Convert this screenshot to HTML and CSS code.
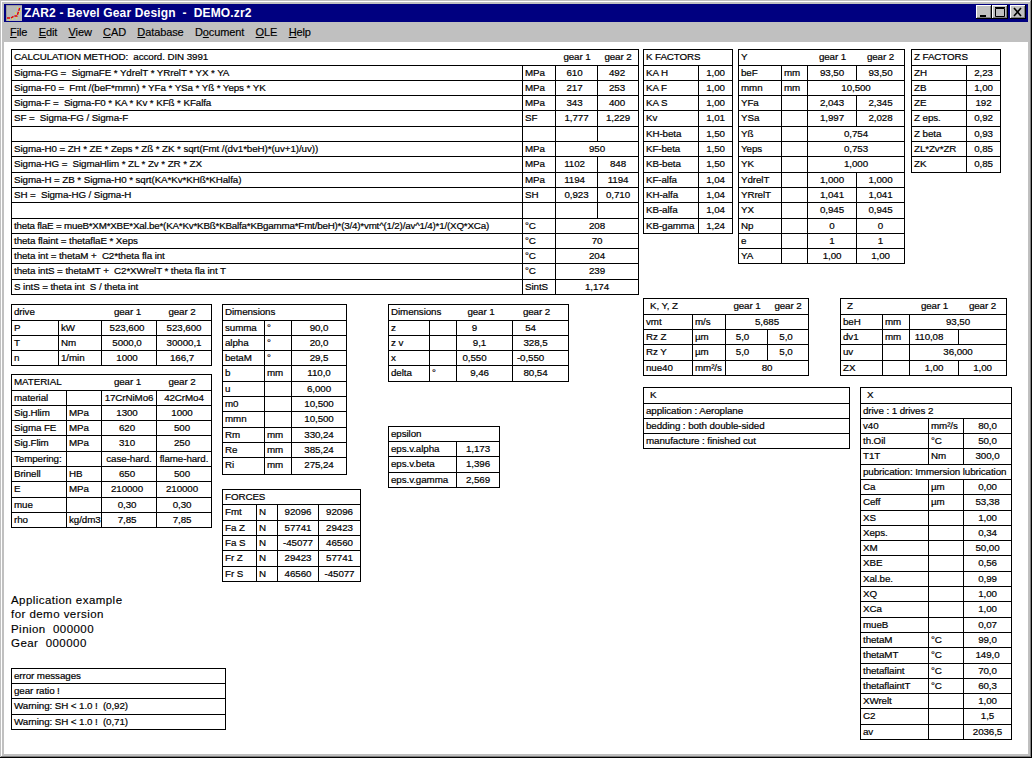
FILE: index.html
```html
<!DOCTYPE html>
<html lang="en">
<head>
<meta charset="utf-8">
<title>ZAR2 - Bevel Gear Design - DEMO.zr2</title>
<link rel="stylesheet" href="styles.css">
</head>
<body>
<div class="window">
  <div class="titlebar">
    <svg class="appicon" viewBox="0 0 16 16" width="16" height="16">
      <rect width="16" height="16" fill="#b8b8b8"/>
      <path d="M0 16V0h16" fill="none" stroke="#808080"/>
      <path d="M1 13h4l3-2h3l1-3 2-6" fill="none" stroke="#e00000" stroke-width="1.4" stroke-dasharray="3 1"/>
      <path d="M3 15h1M6 14h1M9 8h1M10 13h1M14 6h1M11 3h1M13 9h1" stroke="#ffff00"/>
    </svg>
    <span class="title">ZAR2 - Bevel Gear Design &nbsp;-&nbsp; DEMO.zr2</span>
    <div class="winbtns">
      <span class="winbtn"><svg viewBox="0 0 15 14" width="15" height="14"><path d="M4 11h6" stroke="#000" stroke-width="2"/></svg></span>
      <span class="winbtn"><svg viewBox="0 0 15 14" width="15" height="14"><path d="M3.5 3.5h9v8h-9zM3 2.5h10" fill="none" stroke="#000"/></svg></span>
      <span class="winbtn close"><svg viewBox="0 0 15 14" width="15" height="14"><path d="M4 3l7 8M11 3l-7 8" stroke="#000" stroke-width="1.6"/></svg></span>
    </div>
  </div>
  <div class="menubar">
    <span class="mi"><u>F</u>ile</span>
    <span class="mi"><u>E</u>dit</span>
    <span class="mi"><u>V</u>iew</span>
    <span class="mi"><u>C</u>AD</span>
    <span class="mi"><u>D</u>atabase</span>
    <span class="mi">D<u>o</u>cument</span>
    <span class="mi"><u>O</u>LE</span>
    <span class="mi"><u>H</u>elp</span>
  </div>
  <div class="client">
    <div class="leftcol">
      <div class="t calc">
        <div class="c nb s2">CALCULATION METHOD: &nbsp;accord. DIN 3991</div><div class="n nb">gear 1</div><div class="n">gear 2</div>
        <div class="c">Sigma-FG = &nbsp;SigmaFE * YdrelT * YRrelT * YX * YA</div><div class="c">MPa</div><div class="n sh3">610</div><div class="n sh2">492</div>
        <div class="c">Sigma-F0 = &nbsp;Fmt /(beF*mmn) * YFa * YSa * Yß * Yeps * YK</div><div class="c">MPa</div><div class="n sh3">217</div><div class="n sh2">253</div>
        <div class="c">Sigma-F = &nbsp;Sigma-F0 * KA * Kv * KFß * KFalfa</div><div class="c">MPa</div><div class="n sh3">343</div><div class="n sh2">400</div>
        <div class="c">SF = &nbsp;Sigma-FG / Sigma-F</div><div class="c">SF</div><div class="n">1,777</div><div class="n">1,229</div>
        <div class="c"></div><div class="c"></div><div class="n"></div><div class="n"></div>
        <div class="c">Sigma-H0 = ZH * ZE * Zeps * Zß * ZK * sqrt(Fmt /(dv1*beH)*(uv+1)/uv))</div><div class="c">MPa</div><div class="n s2">950</div>
        <div class="c">Sigma-HG = &nbsp;SigmaHlim * ZL * Zv * ZR * ZX</div><div class="c">MPa</div><div class="n sh3">1102</div><div class="n">848</div>
        <div class="c">Sigma-H = ZB * Sigma-H0 * sqrt(KA*Kv*KHß*KHalfa)</div><div class="c">MPa</div><div class="n sh3">1194</div><div class="n">1194</div>
        <div class="c">SH = &nbsp;Sigma-HG / Sigma-H</div><div class="c">SH</div><div class="n">0,923</div><div class="n">0,710</div>
        <div class="c"></div><div class="c"></div><div class="n"></div><div class="n"></div>
        <div class="c narrow">theta flaE = mueB*XM*XBE*Xal.be*(KA*Kv*KBß*KBalfa*KBgamma*Fmt/beH)*(3/4)*vmt^(1/2)/av^1/4)*1/(XQ*XCa)</div><div class="c">°C</div><div class="n s2">208</div>
        <div class="c">theta flaint = thetaflaE * Xeps</div><div class="c">°C</div><div class="n s2">70</div>
        <div class="c">theta int = thetaM + &nbsp;C2*theta fla int</div><div class="c">°C</div><div class="n s2">204</div>
        <div class="c">theta intS = thetaMT + &nbsp;C2*XWrelT * theta fla int T</div><div class="c">°C</div><div class="n s2">239</div>
        <div class="c">S intS = theta int &nbsp;S / theta int</div><div class="c">SintS</div><div class="n s2">1,174</div>
      </div>
      <div class="lowerrow">
        <div class="stack stack-a">
          <div class="t drive">
            <div class="c nb s2">drive</div><div class="n nb sh3">gear 1</div><div class="n sh3">gear 2</div>
            <div class="c">P</div><div class="c">kW</div><div class="n sh3">523,600</div><div class="n">523,600</div>
            <div class="c">T</div><div class="c">Nm</div><div class="n sh3">5000,0</div><div class="n">30000,1</div>
            <div class="c">n</div><div class="c">1/min</div><div class="n sh3">1000</div><div class="n sh3">166,7</div>
          </div>
          <div class="t material">
            <div class="c nb s2">MATERIAL</div><div class="n nb sh3">gear 1</div><div class="n sh3">gear 2</div>
            <div class="c">material</div><div class="c"></div><div class="n">17CrNiMo6</div><div class="n">42CrMo4</div>
            <div class="c">Sig.Hlim</div><div class="c">MPa</div><div class="n sh3">1300</div><div class="n sh3">1000</div>
            <div class="c">Sigma FE</div><div class="c">MPa</div><div class="n sh3">620</div><div class="n sh3">500</div>
            <div class="c">Sig.Flim</div><div class="c">MPa</div><div class="n sh3">310</div><div class="n sh3">250</div>
            <div class="c">Tempering:</div><div class="c"></div><div class="n">case-hard.</div><div class="n">flame-hard.</div>
            <div class="c">Brinell</div><div class="c">HB</div><div class="n sh3">650</div><div class="n sh3">500</div>
            <div class="c">E</div><div class="c">MPa</div><div class="n sh3">210000</div><div class="n sh3">210000</div>
            <div class="c">mue</div><div class="c"></div><div class="n sh3">0,30</div><div class="n sh3">0,30</div>
            <div class="c">rho</div><div class="c">kg/dm3</div><div class="n sh3">7,85</div><div class="n sh3">7,85</div>
          </div>
        </div>
        <div class="stack stack-b">
          <div class="t dims">
            <div class="c s3">Dimensions</div>
            <div class="c">summa</div><div class="c">°</div><div class="n">90,0</div>
            <div class="c">alpha</div><div class="c">°</div><div class="n">20,0</div>
            <div class="c">betaM</div><div class="c">°</div><div class="n">29,5</div>
            <div class="c">b</div><div class="c">mm</div><div class="n">110,0</div>
            <div class="c">u</div><div class="c"></div><div class="n">6,000</div>
            <div class="c">m0</div><div class="c"></div><div class="n">10,500</div>
            <div class="c">mmn</div><div class="c"></div><div class="n">10,500</div>
            <div class="c">Rm</div><div class="c">mm</div><div class="n">330,24</div>
            <div class="c">Re</div><div class="c">mm</div><div class="n">385,24</div>
            <div class="c">Ri</div><div class="c">mm</div><div class="n">275,24</div>
          </div>
          <div class="t forces">
            <div class="c s4">FORCES</div>
            <div class="c">Fmt</div><div class="c">N</div><div class="n">92096</div><div class="n">92096</div>
            <div class="c">Fa Z</div><div class="c">N</div><div class="n">57741</div><div class="n">29423</div>
            <div class="c">Fa S</div><div class="c">N</div><div class="n">-45077</div><div class="n">46560</div>
            <div class="c">Fr Z</div><div class="c">N</div><div class="n">29423</div><div class="n">57741</div>
            <div class="c">Fr S</div><div class="c">N</div><div class="n">46560</div><div class="n">-45077</div>
          </div>
        </div>
        <div class="stack stack-c">
          <div class="t dims2">
            <div class="c nb s2">Dimensions</div><div class="n nb sh8">gear 1</div><div class="n sh8">gear 2</div>
            <div class="c">z</div><div class="c"></div><div class="n sh20">9</div><div class="n sh20">54</div>
            <div class="c">z v</div><div class="c"></div><div class="n sh10">9,1</div><div class="n sh10">328,5</div>
            <div class="c">x</div><div class="c"></div><div class="n sh20">0,550</div><div class="n sh20">-0,550</div>
            <div class="c">delta</div><div class="c">°</div><div class="n sh10">9,46</div><div class="n sh10">80,54</div>
          </div>
          <div class="t epsilon">
            <div class="c s2">epsilon</div>
            <div class="c">eps.v.alpha</div><div class="n">1,173</div>
            <div class="c">eps.v.beta</div><div class="n">1,396</div>
            <div class="c">eps.v.gamma</div><div class="n">2,569</div>
          </div>
        </div>
      </div>
      <p class="note">Application example<br>for demo version<br>Pinion &nbsp;000000<br>Gear &nbsp;000000</p>
      <div class="t errors">
        <div class="c">error messages</div>
        <div class="c">gear ratio !</div>
        <div class="c">Warning: SH &lt; 1.0 ! &nbsp;(0,92)</div>
        <div class="c">Warning: SH &lt; 1.0 ! &nbsp;(0,71)</div>
      </div>
    </div>
    <div class="rightcol">
      <div class="rrow rrow-1">
        <div class="t kf">
          <div class="c s2">K FACTORS</div>
          <div class="c">KA H</div><div class="n">1,00</div>
          <div class="c">KA F</div><div class="n">1,00</div>
          <div class="c">KA S</div><div class="n">1,00</div>
          <div class="c">Kv</div><div class="n">1,01</div>
          <div class="c">KH-beta</div><div class="n">1,50</div>
          <div class="c">KF-beta</div><div class="n">1,50</div>
          <div class="c">KB-beta</div><div class="n">1,50</div>
          <div class="c">KF-alfa</div><div class="n">1,04</div>
          <div class="c">KH-alfa</div><div class="n">1,04</div>
          <div class="c">KB-alfa</div><div class="n">1,04</div>
          <div class="c">KB-gamma</div><div class="n">1,24</div>
        </div>
        <div class="t yt">
          <div class="c nb s2">Y</div><div class="n nb">gear 1</div><div class="n">gear 2</div>
          <div class="c">beF</div><div class="c">mm</div><div class="n">93,50</div><div class="n">93,50</div>
          <div class="c">mmn</div><div class="c">mm</div><div class="n s2">10,500</div>
          <div class="c">YFa</div><div class="c"></div><div class="n">2,043</div><div class="n">2,345</div>
          <div class="c">YSa</div><div class="c"></div><div class="n">1,997</div><div class="n">2,028</div>
          <div class="c">Yß</div><div class="c"></div><div class="n s2">0,754</div>
          <div class="c">Yeps</div><div class="c"></div><div class="n s2">0,753</div>
          <div class="c">YK</div><div class="c"></div><div class="n s2">1,000</div>
          <div class="c">YdrelT</div><div class="c"></div><div class="n">1,000</div><div class="n">1,000</div>
          <div class="c">YRrelT</div><div class="c"></div><div class="n">1,041</div><div class="n">1,041</div>
          <div class="c">YX</div><div class="c"></div><div class="n">0,945</div><div class="n">0,945</div>
          <div class="c">Np</div><div class="c"></div><div class="n">0</div><div class="n">0</div>
          <div class="c">e</div><div class="c"></div><div class="n">1</div><div class="n">1</div>
          <div class="c">YA</div><div class="c"></div><div class="n">1,00</div><div class="n">1,00</div>
        </div>
        <div class="t zf">
          <div class="c s2">Z FACTORS</div>
          <div class="c">ZH</div><div class="n">2,23</div>
          <div class="c">ZB</div><div class="n">1,00</div>
          <div class="c">ZE</div><div class="n">192</div>
          <div class="c">Z eps.</div><div class="n">0,92</div>
          <div class="c">Z beta</div><div class="n">0,93</div>
          <div class="c">ZL*Zv*ZR</div><div class="n">0,85</div>
          <div class="c">ZK</div><div class="n">0,85</div>
        </div>
      </div>
      <div class="rrow rrow-2">
        <div class="t kyz">
          <div class="c nb s2 pad">K, Y, Z</div><div class="n nb">gear 1</div><div class="n">gear 2</div>
          <div class="c">vmt</div><div class="c">m/s</div><div class="n s2">5,685</div>
          <div class="c">Rz Z</div><div class="c">µm</div><div class="n sh8">5,0</div><div class="n sh3">5,0</div>
          <div class="c">Rz Y</div><div class="c">µm</div><div class="n sh8">5,0</div><div class="n sh3">5,0</div>
          <div class="c">nue40</div><div class="c">mm²/s</div><div class="n s2">80</div>
        </div>
        <div class="t zt">
          <div class="c nb s2 pad">Z</div><div class="n nb">gear 1</div><div class="n">gear 2</div>
          <div class="c">beH</div><div class="c">mm</div><div class="n s2">93,50</div>
          <div class="c">dv1</div><div class="c">mm</div><div class="n sh10">110,08</div><div class="n"></div>
          <div class="c">uv</div><div class="c"></div><div class="n s2">36,000</div>
          <div class="c">ZX</div><div class="c"></div><div class="n">1,00</div><div class="n">1,00</div>
        </div>
      </div>
      <div class="rrow rrow-3">
        <div class="t kt">
          <div class="c pad">K</div>
          <div class="c">application : Aeroplane</div>
          <div class="c">bedding : both double-sided</div>
          <div class="c">manufacture : finished cut</div>
        </div>
        <div class="t xt">
          <div class="c s3 pad">X</div>
          <div class="c s3">drive : 1 drives 2</div>
          <div class="c">v40</div><div class="c">mm²/s</div><div class="n">80,0</div>
          <div class="c">th.Oil</div><div class="c">°C</div><div class="n">50,0</div>
          <div class="c">T1T</div><div class="c">Nm</div><div class="n">300,0</div>
          <div class="c s3">pubrication: Immersion lubrication</div>
          <div class="c">Ca</div><div class="c">µm</div><div class="n">0,00</div>
          <div class="c">Ceff</div><div class="c">µm</div><div class="n">53,38</div>
          <div class="c">XS</div><div class="c"></div><div class="n">1,00</div>
          <div class="c">Xeps.</div><div class="c"></div><div class="n">0,34</div>
          <div class="c">XM</div><div class="c"></div><div class="n">50,00</div>
          <div class="c">XBE</div><div class="c"></div><div class="n">0,56</div>
          <div class="c">Xal.be.</div><div class="c"></div><div class="n">0,99</div>
          <div class="c">XQ</div><div class="c"></div><div class="n">1,00</div>
          <div class="c">XCa</div><div class="c"></div><div class="n">1,00</div>
          <div class="c">mueB</div><div class="c"></div><div class="n">0,07</div>
          <div class="c">thetaM</div><div class="c">°C</div><div class="n">99,0</div>
          <div class="c">thetaMT</div><div class="c">°C</div><div class="n">149,0</div>
          <div class="c">thetaflaint</div><div class="c">°C</div><div class="n">70,0</div>
          <div class="c">thetaflaintT</div><div class="c">°C</div><div class="n">60,3</div>
          <div class="c">XWrelt</div><div class="c"></div><div class="n">1,00</div>
          <div class="c">C2</div><div class="c"></div><div class="n">1,5</div>
          <div class="c">av</div><div class="c"></div><div class="n">2036,5</div>
        </div>
      </div>
    </div>
  </div>
</div>
</body>
</html>
```
FILE: styles.css
```css
* { box-sizing: border-box; }
html, body { margin: 0; padding: 0; background: #c0c0c0; }
body { width: 1032px; height: 758px; overflow: hidden; font-family: "Liberation Sans", Arial, sans-serif; }

.window {
  width: 1032px; height: 758px; padding: 4px; background: #c0c0c0;
  display: flex; flex-direction: column;
  box-shadow: inset -1px -1px 0 #000, inset 1px 1px 0 #c0c0c0, inset -2px -2px 0 #808080, inset 2px 2px 0 #fff;
}
.titlebar {
  height: 18px; flex: none; background: #000080; color: #fff;
  display: flex; align-items: center; padding-left: 2px;
}
.appicon { flex: none; margin-right: 2px; }
.title { font-size: 12px; font-weight: 700; white-space: pre; letter-spacing: .15px; }
.winbtns { margin-left: auto; display: flex; margin-right: 2px; margin-bottom: 2px; }
.winbtn {
  width: 16px; height: 14px; background: #c0c0c0; display: block;
  box-shadow: inset -1px -1px 0 #000, inset 1px 1px 0 #fff, inset -2px -2px 0 #808080;
}
.winbtn svg { display: block; }
.winbtn.close { margin-left: 2px; }

.menubar {
  height: 20px; flex: none; display: flex; align-items: center; padding-left: 6px;
  font-size: 11px; color: #000; gap: 11.3px; letter-spacing: -.1px;
  -webkit-text-stroke: .15px #000;
}
.client {
  flex: 1; background: #fff; display: flex; padding: 7.3px 0 0 7px; color: #000; min-height: 0;
}
.leftcol { width: 632px; flex: none; }
.rightcol { flex: none; }

/* Data tables */
.t {
  display: grid; grid-auto-rows: 15.3px; width: max-content;
  border-top: 1px solid #000; border-left: 1px solid #000;
  font-size: 9.8px; line-height: 14px; letter-spacing: -.09px;
  -webkit-text-stroke: .2px #000;
}
.c, .n {
  border-right: 1px solid #000; border-bottom: 1px solid #000;
  white-space: nowrap; min-width: 0;
}
.c { padding-left: 2px; }
.n { text-align: center; }
.nb { border-right: 0; }
.narrow { letter-spacing: -.2px; }
.s2 { grid-column: span 2; }
.s3 { grid-column: span 3; }
.s4 { grid-column: span 4; }
.pad { padding-left: 6px; }
.sh2 { padding-right: 2px; }
.sh3 { padding-right: 4px; }
.sh8 { padding-right: 8px; }
.sh10 { padding-right: 10px; }
.sh20 { padding-right: 20px; }

.calc { grid-template-columns: 511px 33px 42px 41px; }
.drive { grid-template-columns: 47px 43px 55px 55px; }
.material { grid-template-columns: 55px 35px 55px 55px; margin-top: 7.8px; }
.dims { grid-template-columns: 42px 27px 55px; grid-template-rows: repeat(10, 15.3px) 16.3px; }
.forces { grid-template-columns: 34px 21px 41px 42px; margin-top: 14.7px; }
.dims2 { grid-template-columns: 41px 27px 56px 56px; }
.epsilon { grid-template-columns: 68px 43px; margin-top: 44px; }
.errors { grid-template-columns: 214px; }
.kf, .zf { grid-template-columns: 55px 34px; }
.yt { grid-template-columns: 43px 26px 49px 48px; margin-left: 5px; }
.zf { margin-left: 6px; }
.kyz { grid-template-columns: 49px 33px 42px 41px; }
.zt { grid-template-columns: 42px 27px 49px 48px; margin-left: 31px; }
.kt { grid-template-columns: 206px; }
.xt { grid-template-columns: 68px 35px 48px; margin-left: 10px; }

.lowerrow { display: flex; margin-top: 9.2px; }
.stack-a { width: 211px; }
.stack-b { width: 166px; }
.rrow { display: flex; align-items: flex-start; }
.rrow-2 { margin-top: 33.9px; }
.rrow-3 { margin-top: 11.4px; }

.note {
  margin: 11px 0 17.5px; font-size: 11.5px; line-height: 14.3px; letter-spacing: .45px;
  -webkit-text-stroke: .15px #000;
}
```
